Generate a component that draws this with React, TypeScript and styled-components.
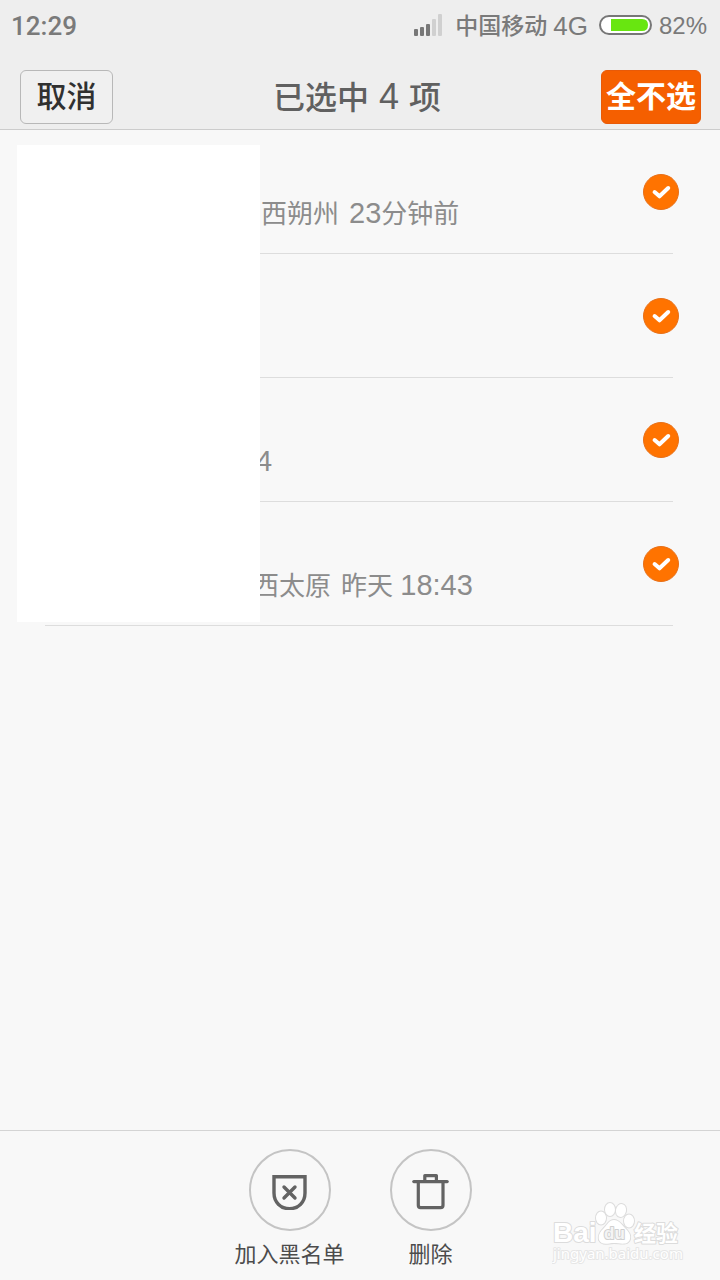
import React, { useState } from "react";
import styled, { createGlobalStyle } from "styled-components";

const GlobalStyle = createGlobalStyle`
  * { box-sizing: border-box; }
  body {
    margin: 0;
    background: #f8f8f8;
    font-family: "Liberation Sans", "Noto Sans CJK SC", sans-serif;
  }
  button, input { font-family: inherit; margin: 0; }
`;

const Screen = styled.div`
  display: flex;
  flex-direction: column;
  min-height: 100vh;
`;

const Header = styled.header`
  background: #eeeeee;
  border-bottom: 1px solid #cccccc;
`;

const StatusBar = styled.div`
  display: flex;
  align-items: center;
  height: 52px;
  padding: 0 13px 0 11px;
  color: #7a7a7a;
`;

const StatusText = styled.span<{ $size: number; $gap?: number }>`
  font-size: ${(p) => p.$size}px;
  font-weight: 500;
  line-height: 32px;
  margin-left: ${(p) => p.$gap ?? 0}px;
  white-space: nowrap;
`;

const Clock = styled(StatusText)`
  font-family: Roboto, "Liberation Sans", sans-serif;
`;

const Signal = styled.svg`
  margin: 0 0 2px auto;
`;

const Battery = styled.svg`
  margin: 0 7px 2px 11px;
`;

const Toolbar = styled.div`
  display: grid;
  grid-template-columns: 93px 1fr 100px;
  align-items: center;
  padding: 18px 19px 5px 20px;
`;

const BarButton = styled.button<{ $primary?: boolean }>`
  height: 54px;
  padding: 0;
  border: 1px solid ${(p) => (p.$primary ? "#e85a08" : "#b8b8b8")};
  border-radius: 6px;
  background: ${(p) => (p.$primary ? "#f55f00" : "#f0f0f0")};
  color: ${(p) => (p.$primary ? "#ffffff" : "#303030")};
  font-size: 30px;
  font-weight: ${(p) => (p.$primary ? 700 : 500)};
  line-height: 40px;
  white-space: nowrap;
`;

const Title = styled.h1`
  margin: 0;
  padding-top: 2px;
  color: #606060;
  font-size: 32px;
  font-weight: 500;
  line-height: 52px;
  text-align: center;
`;

const TitleCount = styled.span`
  margin: 0 1px;
  font-size: 36px;
  line-height: 40px;
`;

const Main = styled.main`
  position: relative;
  flex: 1;
`;

const List = styled.ul`
  list-style: none;
  margin: 0;
  padding: 0 47px 0 45px;
`;

const Row = styled.li`
  display: flex;
  align-items: center;
  justify-content: space-between;
  height: 124px;
  border-bottom: 1px solid #dddddd;
`;

const Detail = styled.label<{ $indent: number }>`
  display: flex;
  align-items: baseline;
  gap: 10px;
  padding: 44px 0 0 ${(p) => p.$indent}px;
  color: #8c8c8c;
  font-size: 26px;
  line-height: 40px;
  white-space: pre;
`;

const Digits = styled.span`
  font-size: 29px;
`;

const Check = styled.span`
  display: grid;
  width: 36px;
  height: 36px;
  margin-right: -6px;
  > * { grid-area: 1 / 1; }
  svg { pointer-events: none; }
`;

const CheckInput = styled.input`
  appearance: none;
  width: 36px;
  height: 36px;
  border: 1px solid #c4c4c4;
  border-radius: 50%;
  background: #ffffff;
  &:checked {
    border-color: #e87018;
    background: #ff7300;
  }
`;

const Cover = styled.div`
  position: absolute;
  top: 15px;
  left: 17px;
  width: 243px;
  height: 477px;
  background: #ffffff;
`;

const ActionBar = styled.footer`
  position: relative;
  display: flex;
  justify-content: center;
  gap: 31px;
  height: 150px;
  padding-top: 18px;
  border-top: 1px solid #d4d4d4;
`;

const Action = styled.button`
  display: flex;
  flex-direction: column;
  align-items: center;
  gap: 8px;
  width: 110px;
  padding: 0;
  border: 0;
  background: none;
  color: #4c4c4c;
  font-size: 22px;
  line-height: 32px;
  white-space: nowrap;
`;

const Ring = styled.span`
  display: grid;
  place-items: center;
  width: 82px;
  height: 82px;
  border: 2px solid #c4c4c4;
  border-radius: 50%;
`;

const Watermark = styled.svg`
  position: absolute;
  right: 36px;
  bottom: 12px;
`;

const calls = [
  { indent: 216, place: "西朔州", day: "", digits: "23", rest: "分钟前" },
  { indent: 0, place: "", day: "", digits: "", rest: "" },
  { indent: 211, place: "", day: "", digits: "4", rest: "" },
  { indent: 208, place: "西太原", day: "昨天 ", digits: "18:43", rest: "" },
];

export default function App() {
  const [selected, setSelected] = useState([true, true, true, true]);
  const count = selected.filter(Boolean).length;
  const toggle = (i: number) =>
    setSelected(selected.map((v, n) => (n === i ? !v : v)));

  return (
    <Screen>
      <GlobalStyle />
      <Header>
        <StatusBar>
          <Clock $size={26}>12:29</Clock>
          <Signal width="28" height="22" viewBox="0 0 28 22" aria-hidden="true">
            <g fill="#777777">
              <rect x="0" y="15" width="4" height="7" rx="1" />
              <rect x="6" y="13" width="4" height="9" rx="1" />
              <rect x="12" y="10" width="4" height="12" rx="1" />
            </g>
            <g fill="#d0d0d0">
              <rect x="18" y="5" width="4" height="17" rx="1" />
              <rect x="24" y="0" width="4" height="22" rx="1" />
            </g>
          </Signal>
          <StatusText $size={23} $gap={13}>中国移动</StatusText>
          <StatusText $size={26} $gap={6}>4G</StatusText>
          <Battery width="53" height="20" viewBox="0 0 53 20" aria-hidden="true">
            <rect x="1" y="1" width="51" height="18" rx="9" fill="#fff" stroke="#777" strokeWidth="2" />
            <path d="M12 4H43Q49 4 49 10T43 16H12Z" fill="#68e610" />
          </Battery>
          <StatusText $size={24}>82%</StatusText>
        </StatusBar>
        <Toolbar>
          <BarButton type="button">取消</BarButton>
          <Title>
            已选中 <TitleCount>{count}</TitleCount> 项
          </Title>
          <BarButton type="button" $primary onClick={() => setSelected(selected.map(() => count === 0))}>
            全不选
          </BarButton>
        </Toolbar>
      </Header>

      <Main>
        <List>
          {calls.map((c, i) => (
            <Row key={i}>
              <Detail htmlFor={`call-${i}`} $indent={c.indent}>
                {c.place && <span>{c.place}</span>}
                <span>
                  {c.day}
                  <Digits>{c.digits}</Digits>
                  {c.rest}
                </span>
              </Detail>
              <Check>
                <CheckInput id={`call-${i}`} type="checkbox" checked={selected[i]} onChange={() => toggle(i)} />
                <svg width="36" height="36" viewBox="0 0 36 36" aria-hidden="true">
                  <path d="M11.6 18L16.5 22.3L25.2 14" fill="none" stroke="#fff" strokeWidth="4" strokeLinecap="round" strokeLinejoin="round" />
                </svg>
              </Check>
            </Row>
          ))}
        </List>
        <Cover />
      </Main>

      <ActionBar>
        <Action type="button">
          <Ring>
            <svg width="36" height="40" viewBox="0 0 36 40" fill="none" stroke="#636363" aria-hidden="true">
              <path d="M2 6.7H33V23C33 32.5 26 38.7 17.5 38.7S2 32.5 2 23Z" strokeWidth="3.4" />
              <path d="M12 17L23 28M23 17L12 28" strokeWidth="3.4" strokeLinecap="round" />
            </svg>
          </Ring>
          加入黑名单
        </Action>
        <Action type="button">
          <Ring>
            <svg width="38" height="40" viewBox="0 0 38 40" fill="none" stroke="#636363" strokeWidth="3.2" strokeLinejoin="round" aria-hidden="true">
              <path d="M1.8 11.6H35.2" strokeLinecap="round" />
              <path d="M12.8 11V5.6H24.4V11" />
              <path d="M6.3 12V35.3Q6.3 37.6 8.6 37.6H28.6Q31 37.6 31 35.3V12" />
            </svg>
          </Ring>
          删除
        </Action>
        <Watermark width="132" height="66" viewBox="0 0 132 66" role="img" aria-label="Baidu 经验">
          <g fill="#ffffff" stroke="#dcdcdc" strokeWidth="2" paintOrder="stroke" strokeLinejoin="round" fontWeight="700">
            <text x="1" y="40" fontSize="28" fontFamily="Liberation Sans">Bai</text>
            <text x="82" y="39" fontSize="22" fontFamily="Noto Sans CJK SC">经验</text>
            <ellipse cx="49" cy="16" rx="5" ry="6.5" />
            <ellipse cx="58" cy="7.5" rx="5" ry="6.5" />
            <ellipse cx="69" cy="8.5" rx="5" ry="6.5" transform="rotate(12 69 8.5)" />
            <ellipse cx="77" cy="19" rx="5" ry="6.5" />
            <path d="M62 18C67 18 69 22 73 26C77 30 79 33 78 37C76 44 68 41 62 41S50 44 47 38C46 33 48 30 52 26C56 22 57 18 62 18Z" />
            <text x="52" y="37" fontSize="17" fontFamily="Liberation Sans" fill="#f4f4f4" stroke="#d0d0d0">du</text>
            <text x="1" y="57" fontSize="15" fontFamily="Noto Sans" fontWeight="400" stroke="#e6e6e6">jingyan.baidu.com</text>
          </g>
        </Watermark>
      </ActionBar>
    </Screen>
  );
}
